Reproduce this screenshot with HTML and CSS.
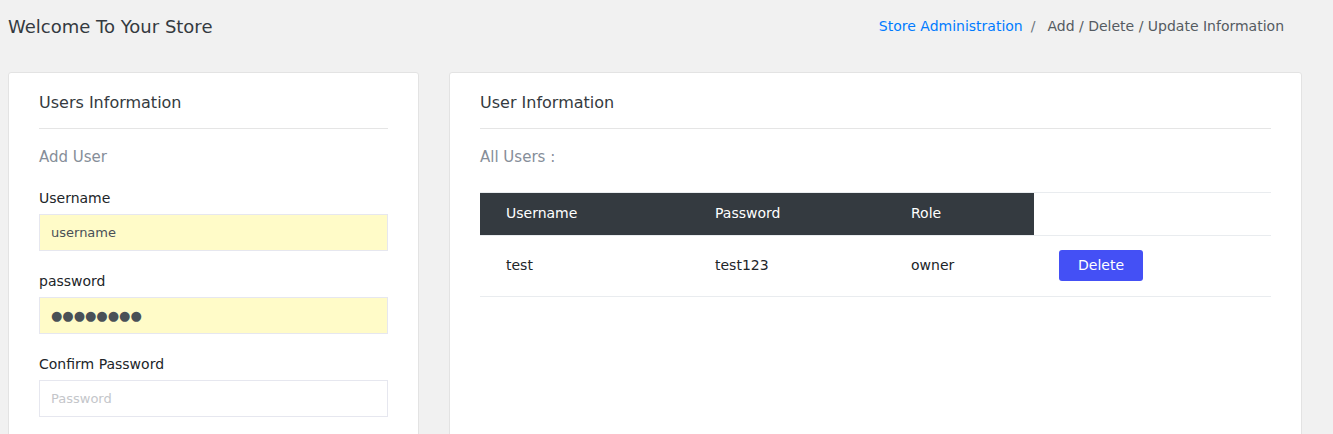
FILE: index.html
```html
<!DOCTYPE html>
<html lang="en">
<head>
<meta charset="utf-8">
<title>Store Administration</title>
<link rel="stylesheet" href="styles.css">
</head>
<body>
<header class="topbar">
  <h1 class="page-title">Welcome To Your Store</h1>
  <nav class="breadcrumb">
    <a class="crumb-link" href="#">Store Administration</a>
    <span class="crumb-sep">/</span>
    <span class="crumb-active">Add / Delete / Update Information</span>
  </nav>
</header>
<main class="content">
  <section class="card card-left">
    <h2 class="card-title">Users Information</h2>
    <hr class="divider">
    <h3 class="sub-title">Add User</h3>
    <form class="form">
      <label class="field-label" for="u">Username</label>
      <input class="field autofill" id="u" type="text" value="username">
      <label class="field-label" for="p">password</label>
      <input class="field autofill dots" id="p" type="text" value="●●●●●●●●">
      <label class="field-label" for="c">Confirm Password</label>
      <input class="field" id="c" type="password" placeholder="Password">
    </form>
  </section>
  <section class="card card-right">
    <h2 class="card-title">User Information</h2>
    <hr class="divider">
    <h3 class="sub-title">All Users :</h3>
    <table class="users">
      <thead>
        <tr>
          <th class="dark c1">Username</th>
          <th class="dark c2">Password</th>
          <th class="dark c3">Role</th>
          <th class="c4"></th>
        </tr>
      </thead>
      <tbody>
        <tr>
          <td>test</td>
          <td>test123</td>
          <td>owner</td>
          <td class="action"><button class="btn-delete" type="button">Delete</button></td>
        </tr>
      </tbody>
    </table>
  </section>
</main>
</body>
</html>
```

FILE: styles.css
```css
* { box-sizing: border-box; }
html, body { margin: 0; padding: 0; }
body {
  background: #f1f1f1;
  font-family: "DejaVu Sans", "Liberation Sans", sans-serif;
  color: #212529;
  height: 434px;
  overflow: hidden;
}
.topbar {
  display: flex;
  align-items: center;
  justify-content: space-between;
  height: 52px;
  padding: 0 49px 0 8px;
}
.page-title {
  margin: 1px 0 0 0;
  font-size: 18px;
  font-weight: normal;
  line-height: 22px;
  color: #343a40;
}
.breadcrumb {
  font-size: 14px;
  line-height: 20px;
  display: flex;
  align-items: center;
}
.crumb-link { color: #007bff; text-decoration: none; }
.crumb-sep { color: #6c757d; padding: 0 12px 0 8px; }
.crumb-active { color: #555b61; }
.content {
  display: flex;
  align-items: flex-start;
  gap: 30px;
  padding: 20px 0 0 8px;
}
.card {
  background: #fff;
  border: 1px solid #e3e3e3;
  border-radius: 3px;
  padding: 19px 30px 30px 30px;
  min-height: 380px;
}
.card-left { width: 411px; }
.card-right { width: 853px; }
.card-title {
  margin: 0;
  font-size: 16px;
  font-weight: normal;
  line-height: 22px;
  color: #343a40;
}
.divider {
  border: 0;
  border-top: 1px solid #e5e5e5;
  margin: 14px 0 0 0;
}
.sub-title {
  margin: 17px 0 0 0;
  font-size: 15px;
  font-weight: normal;
  line-height: 22px;
  color: #868e99;
}
.form { display: flex; flex-direction: column; }
.field-label {
  font-size: 14px;
  line-height: 20px;
  color: #212529;
  margin-top: 20px;
  margin-bottom: 6px;
}
.field {
  width: 100%;
  height: 37px;
  border: 1px solid #e6e7ef;
  border-radius: 0;
  background: #fff;
  padding: 0 11px;
  font-family: "DejaVu Sans", "Liberation Sans", sans-serif;
  font-size: 13px;
  color: #495057;
  outline: none;
}
.field::placeholder { color: #c4c6ca; }
.autofill { background: #fffbc8; }
.dots { font-size: 13px; color: #495057; letter-spacing: 0; }
.users {
  margin-top: 24px;
  width: 100%;
  border-collapse: collapse;
  font-size: 14px;
}
.users th, .users td {
  text-align: left;
  font-weight: normal;
  padding: 0 0 2px 26px;
  border-top: 1px solid #e9ecef;
}
.users th {
  height: 43px;
  color: #fff;
  vertical-align: middle;
}
.users th.dark { background: #343a40; }
.users .c1 { width: 209px; }
.users .c2 { width: 196px; }
.users .c3 { width: 149px; }
.users td {
  height: 61px;
  border-bottom: 1px solid #e9ecef;
  color: #212529;
  vertical-align: middle;
}
.users td.action { padding-left: 25px; }
.btn-delete {
  height: 31px;
  width: 84px;
  padding: 0;
  border: 0;
  border-radius: 3px;
  background: #4450f5;
  color: #fff;
  font-family: "DejaVu Sans", "Liberation Sans", sans-serif;
  font-size: 14px;
  cursor: pointer;
}
```
